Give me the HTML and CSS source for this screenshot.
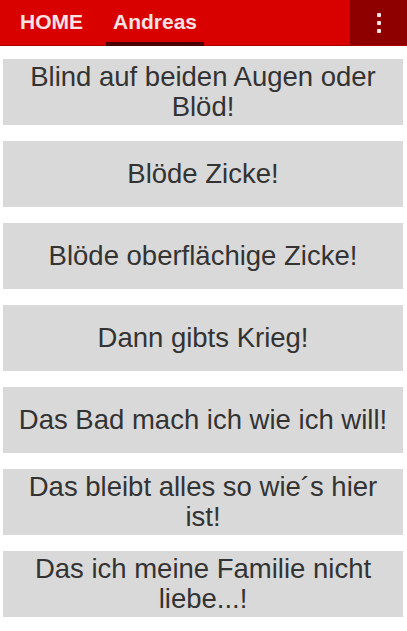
FILE: index.html
```html
<!DOCTYPE html>
<html lang="de">
<head>
  <meta charset="UTF-8">
  <meta name="viewport" content="width=device-width, initial-scale=1.0">
  <title>Andreas</title>
  <link rel="stylesheet" href="styles.css">
</head>
<body>
  <!-- barre du haut -->
  <header class="topbar">
    <nav class="tabs">
      <a class="tab">HOME</a>
      <a class="tab active">Andreas</a>
    </nav>
    <div class="menu">
      <span class="dot"></span>
      <span class="dot"></span>
      <span class="dot"></span>
    </div>
  </header>

  <!-- liste des sprüche -->
  <ul class="list">
    <li class="item">Blind auf beiden Augen oder Blöd!</li>
    <li class="item">Blöde Zicke!</li>
    <li class="item">Blöde oberflächige Zicke!</li>
    <li class="item">Dann gibts Krieg!</li>
    <li class="item">Das Bad mach ich wie ich will!</li>
    <li class="item">Das bleibt alles so wie´s hier ist!</li>
    <li class="item">Das ich meine Familie nicht liebe...!</li>
  </ul>
</body>
</html>
```

FILE: styles.css
```css
body {
  margin: 0;
  font-family: 'Liberation Sans', Arial, sans-serif;
  background-color: #fff;
  color: #333;
}

/* barre rouge */
.topbar {
  display: flex;
  height: 46px;
  background-color: #d90000;
  border-bottom: 1px solid #b00000;
  box-sizing: border-box;
}

.tabs {
  flex: 1;
  display: flex;
  gap: 16px;
  padding-left: 13px;
}

.tab {
  display: flex;
  align-items: center;
  padding: 2px 7px 0 7px;
  font-size: 21px;
  font-weight: bold;
  color: #fbe3e3;
  border-bottom: 4px solid transparent;
}

.tab.active {
  border-bottom-color: #4a0000;
  margin-bottom: -1px;
}

.menu {
  width: 57px;
  display: flex;
  flex-direction: column;
  align-items: center;
  justify-content: center;
  gap: 4px;
  background-color: #8e0000;
}

.dot {
  width: 4px;
  height: 4px;
  background-color: #fbe3e3;
  border-radius: 1px;
}

/* cartes */
.list {
  list-style: none;
  margin: 13px 0 0 0;
  padding: 0;
}

.item {
  display: flex;
  align-items: center;
  justify-content: center;
  height: 66px;
  margin: 0 4px 16px 3px;
  padding: 0 10px;
  box-sizing: border-box;
  background-color: #d9d9d9;
  font-size: 27.5px;
  line-height: 30px;
  text-align: center;
}
```
